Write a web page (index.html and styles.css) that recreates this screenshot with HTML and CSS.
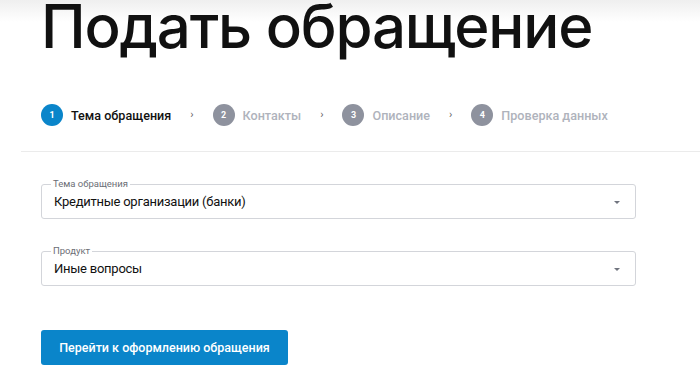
FILE: index.html
```html
<!DOCTYPE html>
<html lang="ru">
<head>
  <meta charset="UTF-8" />
  <meta name="viewport" content="width=device-width, initial-scale=1.0"/>
  <title>Подать обращение</title>
  <link rel="stylesheet" href="styles.css">
</head>
<body>
  <div class="page">
    <h1>Подать обращение</h1>

    <div class="steps">
      <div class="step active"><span class="num">1</span>Тема обращения</div>
      <span class="sep">›</span>
      <div class="step"><span class="num">2</span>Контакты</div>
      <span class="sep">›</span>
      <div class="step"><span class="num">3</span>Описание</div>
      <span class="sep">›</span>
      <div class="step"><span class="num">4</span>Проверка данных</div>
    </div>

    <div class="form">
      <div class="field">
        <span class="label">Тема обращения</span>
        <div class="value">Кредитные организации (банки)</div>
        <span class="arrow"></span>
      </div>

      <div class="field">
        <span class="label">Продукт</span>
        <div class="value">Иные вопросы</div>
        <span class="arrow"></span>
      </div>

      <button class="btn">Перейти к оформлению обращения</button>
    </div>
  </div>
</body>
</html>
```

FILE: styles.css
```css
:root {
  --blue: #0a85ca;
  --grey-circle: #8e929e;
  --grey-text: #afb3bc;
  --border: #d3d5da;
  --text: #111;
}

* {
  box-sizing: border-box;
}

body {
  margin: 0;
  font-family: Roboto, 'Noto Sans', sans-serif;
  color: var(--text);
  background: linear-gradient(#efefef 0, #fff 22px) no-repeat, #fff;
}

.page {
  padding-left: 41px;
}

h1 {
  margin: 0;
  font-family: Inter, Roboto, sans-serif;
  font-size: 60px;
  font-weight: 500;
  line-height: 52px;
  letter-spacing: -1.2px;
}

.steps {
  display: flex;
  align-items: center;
  margin: 51px 0 0 -20px;
  padding: 1px 0 25px 20px;
  border-bottom: 1px solid #ebebeb;
}

.step {
  display: flex;
  align-items: center;
  gap: 8px;
  font-size: 12.6px;
  font-weight: 500;
  color: var(--grey-text);
}

.step.active {
  color: var(--text);
}

.num {
  width: 22px;
  height: 22px;
  border-radius: 50%;
  background: var(--grey-circle);
  color: #fff;
  font-size: 9px;
  font-weight: 700;
  display: flex;
  align-items: center;
  justify-content: center;
}

.active .num {
  background: var(--blue);
}

.sep {
  color: #666;
  font-size: 11px;
  margin: 0 19px 2px 19px;
}

.form {
  width: 595px;
  padding-top: 32px;
}

.field {
  position: relative;
  display: flex;
  align-items: center;
  height: 35px;
  padding: 0 12px;
  margin-bottom: 32px;
  border: 1px solid var(--border);
  border-radius: 3px;
}

.label {
  position: absolute;
  left: 9px;
  top: -7px;
  padding: 0 2px;
  background: #fff;
  font-size: 9.5px;
  line-height: 12px;
  color: #6b6e75;
}

.value {
  font-size: 13px;
  letter-spacing: -0.25px;
}

.arrow {
  position: absolute;
  right: 15px;
  top: 16px;
  border-left: 3px solid transparent;
  border-right: 3px solid transparent;
  border-top: 3px solid #70747f;
}

.btn {
  margin-top: 12px;
  width: 247px;
  height: 35px;
  border: none;
  border-radius: 3px;
  background: var(--blue);
  color: #fff;
  font-family: inherit;
  font-size: 12.5px;
  font-weight: 500;
  cursor: pointer;
}
```
